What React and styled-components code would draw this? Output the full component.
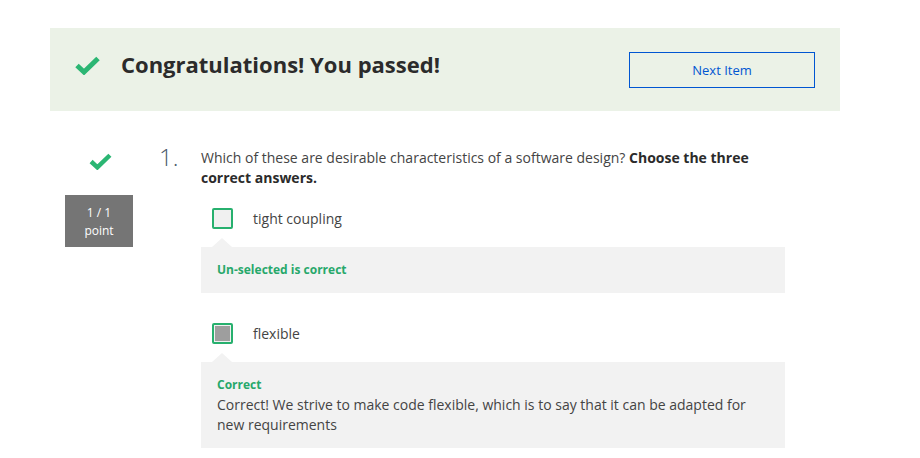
import React from "react";
import styled, { createGlobalStyle } from "styled-components";

const Global = createGlobalStyle`
  html, body { margin: 0; padding: 0; background: #fff; }
  body { font-family: "Open Sans", "Noto Sans", sans-serif; color: #333; }
`;

const Page = styled.div`
  width: 790px;
  margin-left: 50px;
  padding-top: 28px;
`;

const Banner = styled.div`
  height: 83px;
  background: #ebf2e7;
  display: flex;
  align-items: center;
  padding: 0 25px;
  box-sizing: border-box;
`;

const BannerTitle = styled.h1`
  margin: 0 0 0 21px;
  font-size: 22px;
  font-weight: 700;
  color: #2b2b2b;
  flex: 1;
  position: relative;
  top: -6px;
`;

const NextButton = styled.button`
  width: 186px;
  height: 36px;
  background: transparent;
  border: 1px solid #0056d2;
  color: #0056d2;
  font-family: "Open Sans", sans-serif;
  font-size: 13px;
`;

const BannerIcon = styled.span`
  display: inline-flex;
  position: relative;
  top: -4px;
`;

const Check = ({ w = 25, h = 19 }) => (
  <svg width={w} height={h} viewBox="0 0 25 19">
    <path d="M2 9.5 L9 16 L23 2.5" fill="none" stroke="#2bb673" strokeWidth="5" strokeLinejoin="miter" />
  </svg>
);

const Question = styled.div`
  display: grid;
  grid-template-columns: 100px 51px 1fr;
  margin-top: 30px;
`;

const Side = styled.div`
  display: flex;
  flex-direction: column;
  align-items: center;
  padding-top: 12px;
`;

const Points = styled.div`
  margin-top: 25px;
  margin-left: -2px;
  width: 68px;
  height: 52px;
  background: #757575;
  color: #fff;
  font-size: 12px;
  line-height: 18px;
  text-align: center;
  padding-top: 9px;
  box-sizing: border-box;
`;

const Num = styled.div`
  font-size: 24px;
  font-weight: 300;
  color: #4a5a6a;
  line-height: 32px;
  padding-left: 9px;
`;

const Body = styled.div`
  width: 584px;
`;

const Prompt = styled.p`
  margin: 7px 0 0;
  font-size: 14px;
  line-height: 20px;
  color: #444;
  b { color: #2b2b2b; }
`;

const Option = styled.div`
  display: flex;
  align-items: center;
  margin-top: ${(p) => p.$mt}px;
  padding-left: 11px;
  height: 21px;
`;

const Box = styled.span`
  width: 21px;
  height: 21px;
  box-sizing: border-box;
  border: 2px solid #27b06e;
  border-radius: 2px;
  background: #f0f0f0;
  padding: 1px;
  display: inline-flex;
`;

const Fill = styled.span`
  flex: 1;
  background: #9e9e9e;
`;

const Label = styled.span`
  margin-left: 20px;
  font-size: 14px;
  color: #444;
`;

const Feedback = styled.div`
  position: relative;
  margin-top: 18px;
  background: #f2f2f2;
  padding: 13px 16px;
  font-size: 14px;
  line-height: 20px;
  color: #444;
  &::before {
    content: "";
    position: absolute;
    left: 11px;
    top: -9px;
    border-left: 10px solid transparent;
    border-right: 10px solid transparent;
    border-bottom: 9px solid #f2f2f2;
  }
`;

const FbTitle = styled.div`
  font-size: 12px;
  font-weight: 700;
  color: #27a86b;
  line-height: 20px;
`;

export default function App() {
  return (
    <>
      <Global />
      <Page>
        <Banner>
          <BannerIcon>
            <Check w={25} h={19} />
          </BannerIcon>
          <BannerTitle>Congratulations! You passed!</BannerTitle>
          <NextButton>Next Item</NextButton>
        </Banner>
        <Question>
          <Side>
            <Check w={23} h={17} />
            <Points>
              1 / 1
              <br />
              point
            </Points>
          </Side>
          <Num>1.</Num>
          <Body>
            <Prompt>
              Which of these are desirable characteristics of a software design? <b>Choose the three correct answers.</b>
            </Prompt>
            <Option $mt={20}>
              <Box />
              <Label>tight coupling</Label>
            </Option>
            <Feedback>
              <FbTitle>Un-selected is correct</FbTitle>
            </Feedback>
            <Option $mt={30}>
              <Box>
                <Fill />
              </Box>
              <Label>flexible</Label>
            </Option>
            <Feedback>
              <FbTitle>Correct</FbTitle>
              Correct! We strive to make code flexible, which is to say that it can be adapted for new requirements
            </Feedback>
          </Body>
        </Question>
      </Page>
    </>
  );
}
